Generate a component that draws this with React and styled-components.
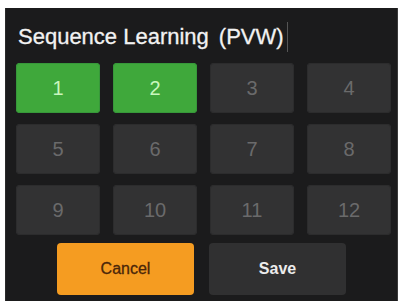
import React from 'react'
import styled, { createGlobalStyle } from 'styled-components'

const Global = createGlobalStyle`
  html, body {
    margin: 0;
    padding: 0;
    background: #ffffff;
  }
  body {
    font-family: "Liberation Sans", Arial, sans-serif;
  }
`

const Panel = styled.div`
  box-sizing: border-box;
  margin: 8px 0 0 5px;
  width: 393px;
  height: 293px;
  background: #1b1b1c;
  border-left: 1px solid #2a2a2a;
  border-right: 1px solid #3a3a3a;
  padding: 15px 0 0 10px;
`

const Title = styled.div`
  display: flex;
  align-items: center;
  height: 28px;
  font-size: 22px;
  line-height: 28px;
  color: #f2f2f2;
  padding-left: 2px;
  -webkit-text-stroke: 0.3px #f2f2f2;
`

const Paren = styled.span`
  margin-left: 10px;
`

const Caret = styled.span`
  display: inline-block;
  width: 1px;
  height: 30px;
  margin-left: 3px;
  background: #555;
`

const Grid = styled.div`
  display: grid;
  grid-template-columns: repeat(4, 84px);
  grid-auto-rows: 50px;
  column-gap: 13px;
  row-gap: 11px;
  margin-top: 12px;
`

const Cell = styled.div`
  display: flex;
  align-items: center;
  justify-content: center;
  border-radius: 4px;
  font-size: 20px;
  background: ${p => (p.$on ? '#3fa83b' : '#323233')};
  color: ${p => (p.$on ? '#c9f6bd' : '#6a6a6b')};
  box-shadow: inset 0 0 0 1px ${p => (p.$on ? '#37983a' : '#2c2c2d')};
`

const Actions = styled.div`
  display: flex;
  justify-content: center;
  gap: 15px;
  margin-top: 8px;
  padding-right: 10px;
`

const Action = styled.div`
  width: 137px;
  height: 52px;
  display: flex;
  align-items: center;
  justify-content: center;
  border-radius: 4px;
  font-size: 16px;
  background: ${p => (p.$primary ? '#f59c21' : '#303031')};
  color: ${p => (p.$primary ? '#4a2609' : '#ececec')};
  font-weight: ${p => (p.$primary ? 'normal' : 'bold')};
  -webkit-text-stroke: ${p => (p.$primary ? '0.3px #4a2609' : '0')};
`

const cells = [1, 2, 3, 4, 5, 6, 7, 8, 9, 10, 11, 12]

const App = () => {
  return (
    <>
      <Global />
      <Panel>
        <Title>
          Sequence Learning<Paren>(PVW)</Paren>
          <Caret />
        </Title>
        <Grid>
          {cells.map(n => (
            <Cell key={n} $on={n <= 2}>{n}</Cell>
          ))}
        </Grid>
        <Actions>
          <Action $primary>Cancel</Action>
          <Action>Save</Action>
        </Actions>
      </Panel>
    </>
  )
}

export default App
